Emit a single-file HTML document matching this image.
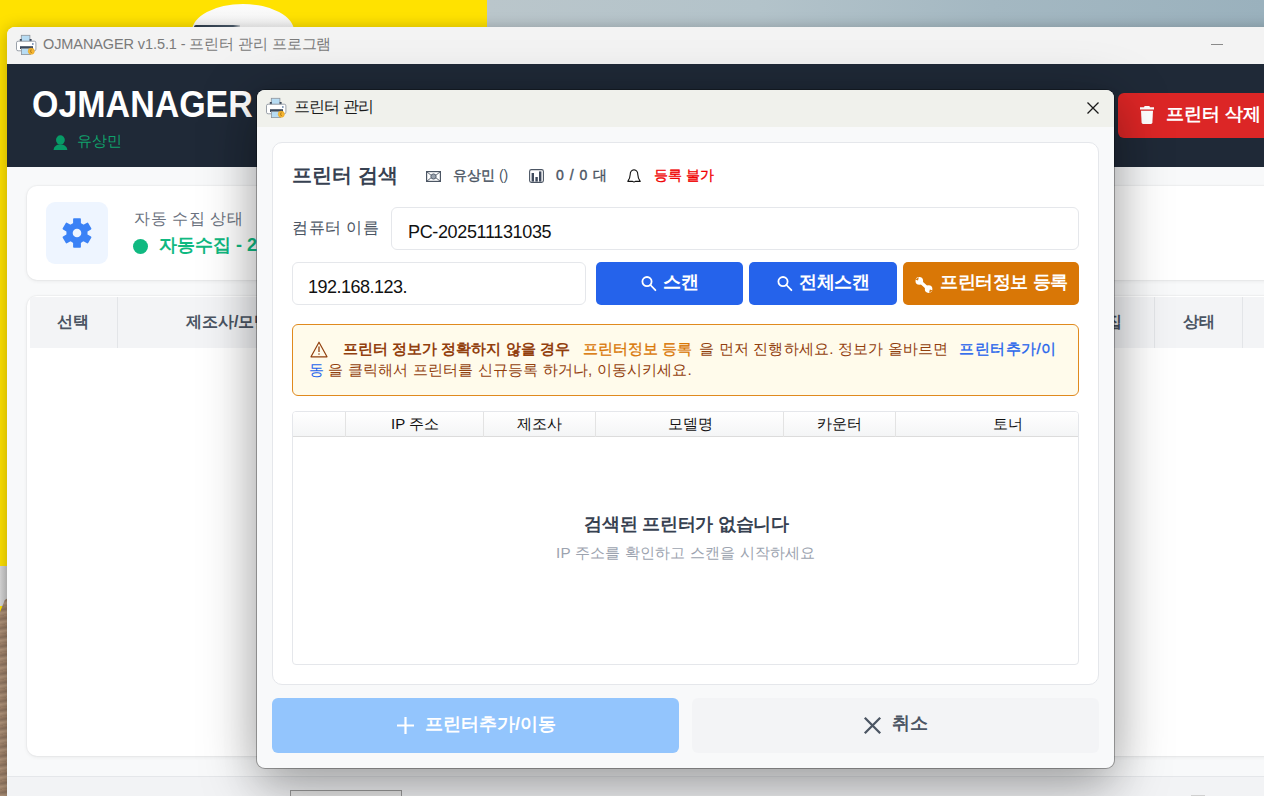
<!DOCTYPE html>
<html><head><meta charset="utf-8">
<style>
*{box-sizing:border-box;margin:0;padding:0}
html,body{width:1264px;height:796px;overflow:hidden}
body{position:relative;font-family:"Liberation Sans",sans-serif;background:#ffe200}
.a{position:absolute}
.t{position:absolute;white-space:nowrap;line-height:1}
svg{position:absolute;overflow:visible}
</style></head><body>

<!-- ===== desktop ===== -->
<div class="a" style="left:487px;top:0;width:777px;height:28px;background:linear-gradient(90deg,#bac6cb 0%,#b3c3ca 35%,#a4b8c2 65%,#9ab1bd 100%)"></div>
<div class="a" style="left:192px;top:4px;width:102px;height:50px;border-radius:51px 51px 0 0/27px 27px 0 0;background:linear-gradient(180deg,#fbfbfb,#eeeeee)"></div>
<div class="a" style="left:194px;top:25px;width:46px;height:2px;background:linear-gradient(90deg,#2c3a4a,#4a5a6a 85%,#c8ccd0);border-radius:2px 0 0 0"></div>
<div class="a" style="left:0;top:566px;width:8px;height:40px;background:linear-gradient(90deg,#dadada,#c4c4c4)"></div>
<div class="a" style="left:0;top:598px;width:8px;height:198px;background:repeating-linear-gradient(170deg,#a8896f 0px,#8f7560 3px,#b3967c 6px,#9a7e66 9px);clip-path:polygon(0 14px,60% 2px,100% 0,100% 100%,0 100%)"></div>

<!-- ===== main window ===== -->
<div class="a" style="left:7px;top:27px;width:1280px;height:790px;background:#f8f9fa;border-top-left-radius:8px;overflow:hidden;box-shadow:0 2px 16px rgba(0,0,0,0.28)">
  <div class="a" style="left:0;top:0;width:1280px;height:37px;background:#f3f3f3"></div>
</div>
<!-- title icon -->
<svg style="left:12px;top:31px" width="28" height="28" viewBox="0 0 28 28">
  <rect x="9.3" y="4.3" width="8.6" height="6.5" fill="#b7dcf3" stroke="#8d949c" stroke-width="0.8"/>
  <rect x="7.8" y="8" width="2" height="2.6" fill="#3c4a5c"/><rect x="17.6" y="8" width="2" height="2.6" fill="#3c4a5c"/>
  <rect x="4.5" y="10.2" width="19.4" height="9.6" rx="1.6" fill="#fff" stroke="#8f96a0" stroke-width="0.9"/>
  <rect x="8" y="15.2" width="13" height="2.8" fill="#3c4a5c"/>
  <rect x="9.4" y="17.6" width="9" height="6" fill="#b7dcf3" stroke="#8d949c" stroke-width="0.8"/>
  <rect x="20.2" y="12.2" width="1.3" height="1.6" fill="#4a6a9a"/>
  <circle cx="19.3" cy="20.2" r="3.1" fill="#f7b731" stroke="#e0a020" stroke-width="0.5"/>
  <path d="M19.2 18.3 L18.6 20.3 L19.5 22" stroke="#8a5a10" stroke-width="0.7" fill="none"/>
</svg>
<div class="t" style="left:43px;top:37px;font-size:14.5px;letter-spacing:-0.1px;color:#7a7a7a">OJMANAGER v1.5.1 - 프린터 관리 프로그램</div>
<div class="a" style="left:1211px;top:44px;width:12px;height:1px;background:#8a8a8a"></div>

<!-- dark header -->
<div class="a" style="left:7px;top:64px;width:1257px;height:103px;background:#1f2937"></div>
<div class="t" style="left:32px;top:86px;font-size:37px;font-weight:bold;color:#fff;transform:scaleX(0.918);transform-origin:0 0">OJMANAGER</div>
<svg style="left:53px;top:135px" width="15" height="15" viewBox="0 0 15 15">
  <ellipse cx="7.4" cy="5" rx="4.4" ry="4.7" fill="#079a66"/>
  <path d="M0.6 15 C0.9 11.2 3.4 9.4 7.4 9.4 C11.4 9.4 13.9 11.2 14.3 15 Z" fill="#079a66"/>
</svg>
<div class="t" style="left:77px;top:133px;font-size:15px;color:#10a06b">유상민</div>

<!-- red delete button -->
<div class="a" style="left:1118px;top:93px;width:170px;height:45px;background:#dc2626;border-radius:6px"></div>
<svg style="left:1139px;top:105px" width="16" height="20" viewBox="0 0 16 20">
  <path d="M1 2.2 H5 L5.6 1 H10.4 L11 2.2 H15 V4.6 H1 Z" fill="#fff"/>
  <path d="M2 5.8 H14 L13.4 17.6 Q13.3 18.9 12 18.9 H4 Q2.7 18.9 2.6 17.6 Z" fill="#fff"/>
</svg>
<div class="t" style="left:1166px;top:105px;font-size:18px;font-weight:bold;color:#fff">프린터 삭제</div>

<!-- status card -->
<div class="a" style="left:27px;top:186px;width:1260px;height:94px;background:#fff;border-radius:10px;box-shadow:0 1px 4px rgba(0,0,0,0.07),0 0 0 1px rgba(0,0,0,0.025)"></div>
<div class="a" style="left:46px;top:202px;width:62px;height:62px;background:#eef5ff;border-radius:9px"></div>
<svg style="left:62px;top:218px" width="30" height="30" viewBox="-15 -15 30 30">
  <g fill="#3b82f6">
    <circle r="10.6"/>
    <rect x="-3.9" y="-14.7" width="7.8" height="8" rx="0.8"/>
    <rect x="-3.9" y="-14.7" width="7.8" height="8" rx="0.8" transform="rotate(60)"/>
    <rect x="-3.9" y="-14.7" width="7.8" height="8" rx="0.8" transform="rotate(120)"/>
    <rect x="-3.9" y="-14.7" width="7.8" height="8" rx="0.8" transform="rotate(180)"/>
    <rect x="-3.9" y="-14.7" width="7.8" height="8" rx="0.8" transform="rotate(240)"/>
    <rect x="-3.9" y="-14.7" width="7.8" height="8" rx="0.8" transform="rotate(300)"/>
  </g>
  <circle r="4.3" fill="#eef5ff"/>
</svg>
<div class="t" style="left:134px;top:211px;font-size:16px;letter-spacing:0.6px;color:#6b7280">자동 수집 상태</div>
<div class="a" style="left:133px;top:239px;width:15px;height:15px;border-radius:50%;background:#10b981"></div>
<div class="t" style="left:159px;top:236px;font-size:18px;font-weight:bold;color:#10b981">자동수집 - 2</div>

<!-- table card -->
<div class="a" style="left:27px;top:296px;width:1260px;height:460px;background:#fff;border-radius:10px;box-shadow:0 1px 4px rgba(0,0,0,0.07),0 0 0 1px rgba(0,0,0,0.025);overflow:hidden">
  <div class="a" style="left:3px;top:1px;width:1258px;height:51px;background:#f3f4f6"></div>
  <div class="a" style="left:90px;top:1px;width:1px;height:51px;background:#e3e5e8"></div>
  <div class="a" style="left:1127px;top:1px;width:1px;height:51px;background:#e3e5e8"></div>
  <div class="a" style="left:1215px;top:1px;width:1px;height:51px;background:#e3e5e8"></div>
</div>
<div class="t" style="left:57px;top:314px;font-size:16px;font-weight:bold;color:#4b5563">선택</div>
<div class="t" style="left:186px;top:314px;font-size:16px;font-weight:bold;color:#4b5563">제조사/모델</div>
<div class="t" style="left:1090px;top:314px;font-size:16px;font-weight:bold;color:#4b5563">수집</div>
<div class="t" style="left:1183px;top:314px;font-size:16px;font-weight:bold;color:#4b5563">상태</div>

<!-- footer -->
<div class="a" style="left:7px;top:776px;width:1257px;height:20px;background:#f2f3f5;border-top:1px solid #e5e7ea"></div>
<div class="a" style="left:1191px;top:795px;width:14px;height:2px;background:#d0d0d0"></div>
<div class="a" style="left:290px;top:790px;width:112px;height:20px;border:1px solid #9a9a9a;background:#e9e9e9"></div>

<!-- ===== dialog ===== -->
<div id="dlg" class="a" style="left:257px;top:90px;width:857px;height:678px;background:#f8f9fa;border-radius:8px;box-shadow:0 0 0 1px rgba(0,0,0,0.3),0 12px 56px rgba(0,0,0,0.36),0 24px 40px rgba(0,0,0,0.08);overflow:hidden">
  <div class="a" style="left:0;top:0;width:857px;height:37px;background:#f0f1ec"></div>
</div>


<!-- dialog title -->
<svg style="left:262px;top:94px" width="28" height="28" viewBox="0 0 28 28">
  <rect x="9.3" y="4.3" width="8.6" height="6.5" fill="#b7dcf3" stroke="#8d949c" stroke-width="0.8"/>
  <rect x="7.8" y="8" width="2" height="2.6" fill="#3c4a5c"/><rect x="17.6" y="8" width="2" height="2.6" fill="#3c4a5c"/>
  <rect x="4.5" y="10.2" width="19.4" height="9.6" rx="1.6" fill="#fff" stroke="#8f96a0" stroke-width="0.9"/>
  <rect x="8" y="15.2" width="13" height="2.8" fill="#3c4a5c"/>
  <rect x="9.4" y="17.6" width="9" height="6" fill="#b7dcf3" stroke="#8d949c" stroke-width="0.8"/>
  <rect x="20.2" y="12.2" width="1.3" height="1.6" fill="#4a6a9a"/>
  <circle cx="19.3" cy="20.2" r="3.1" fill="#f7b731" stroke="#e0a020" stroke-width="0.5"/>
  <path d="M19.2 18.3 L18.6 20.3 L19.5 22" stroke="#8a5a10" stroke-width="0.7" fill="none"/>
</svg>
<div class="t" style="left:294px;top:99px;font-size:16px;color:#1a1a1a;letter-spacing:-0.8px">프린터 관리</div>
<svg style="left:1087px;top:102px" width="12" height="12" viewBox="0 0 12 12"><path d="M0.5 0.5 L11.5 11.5 M11.5 0.5 L0.5 11.5" stroke="#1a1a1a" stroke-width="1.3"/></svg>

<!-- card -->
<div class="a" style="left:272px;top:142px;width:827px;height:543px;background:#fff;border:1px solid #e5e7eb;border-radius:10px"></div>
<div class="t" style="left:292px;top:165px;font-size:20px;font-weight:bold;color:#374151">프린터 검색</div>

<svg style="left:426px;top:171px" width="15" height="11" viewBox="0 0 15 11">
  <rect x="0.6" y="0.6" width="13.8" height="9.8" fill="none" stroke="#4b5563" stroke-width="1.2"/>
  <path d="M0.6 0.6 L5 4.2 M14.4 0.6 L10 4.2 M0.6 10.4 L5 6.8 M14.4 10.4 L10 6.8" stroke="#4b5563" stroke-width="0.9"/>
  <circle cx="7.5" cy="5.5" r="2.6" fill="#9aa3ae" stroke="#4b5563" stroke-width="0.9"/>
</svg>
<div class="t" style="left:453px;top:168px;font-size:14px;color:#4b5563"><span style="-webkit-text-stroke:0.4px #4b5563">유상민</span> ()</div>
<svg style="left:529px;top:169px" width="15" height="14" viewBox="0 0 15 14">
  <rect x="0.6" y="0.6" width="13.8" height="12.8" rx="1.8" fill="none" stroke="#4b5563" stroke-width="1.1"/>
  <rect x="2.6" y="4" width="2.4" height="8.6" fill="#3f4a5c"/>
  <rect x="6.4" y="8" width="2.4" height="4.6" fill="#3f4a5c"/>
  <rect x="10" y="2.4" width="2.4" height="10.2" fill="#3f4a5c"/>
</svg>
<div class="t" style="left:556px;top:168px;font-size:14px;color:#4b5563;word-spacing:2px;-webkit-text-stroke:0.4px #4b5563">0 / 0 대</div>
<svg style="left:627px;top:169px" width="14" height="14" viewBox="0 0 14 14">
  <path d="M7 0.8 C4.6 1.2 3.2 2.8 3.2 5.6 C3.2 8.6 2.6 9.8 0.8 12.4 H5.6 Q7 13.6 8.4 12.4 H13.2 C11.4 9.8 10.8 8.6 10.8 5.6 C10.8 2.8 9.4 1.2 7 0.8 Z" fill="none" stroke="#111" stroke-width="1.1" stroke-linejoin="round"/>
</svg>
<div class="t" style="left:654px;top:168px;font-size:14px;color:#f00000;-webkit-text-stroke:0.35px #f00000">등록 불가</div>

<div class="t" style="left:292px;top:220px;font-size:16px;letter-spacing:0.5px;color:#4b5563">컴퓨터 이름</div>
<div class="a" style="left:391px;top:207px;width:688px;height:43px;background:#fff;border:1px solid #e5e7eb;border-radius:6px"></div>
<div class="t" style="left:408px;top:223px;font-size:18px;color:#111;letter-spacing:-0.35px">PC-202511131035</div>

<div class="a" style="left:292px;top:262px;width:294px;height:43px;background:#fff;border:1px solid #e5e7eb;border-radius:6px"></div>
<div class="t" style="left:308px;top:278px;font-size:18px;color:#111;letter-spacing:-0.5px">192.168.123.</div>

<div class="a" style="left:596px;top:262px;width:147px;height:43px;background:#2563eb;border-radius:5px"></div>
<svg style="left:640px;top:275px" width="17" height="17" viewBox="0 0 17 17"><circle cx="7" cy="6.6" r="4.6" fill="none" stroke="#fff" stroke-width="1.8"/><path d="M10.4 10 L15.4 15.2" stroke="#fff" stroke-width="1.8" stroke-linecap="round"/></svg>
<div class="t" style="left:663px;top:273px;font-size:18px;font-weight:bold;color:#fff">스캔</div>

<div class="a" style="left:749px;top:262px;width:148px;height:43px;background:#2563eb;border-radius:5px"></div>
<svg style="left:776px;top:275px" width="17" height="17" viewBox="0 0 17 17"><circle cx="7" cy="6.6" r="4.6" fill="none" stroke="#fff" stroke-width="1.8"/><path d="M10.4 10 L15.4 15.2" stroke="#fff" stroke-width="1.8" stroke-linecap="round"/></svg>
<div class="t" style="left:799px;top:273px;font-size:18px;font-weight:bold;color:#fff;letter-spacing:-0.5px">전체스캔</div>

<div class="a" style="left:903px;top:262px;width:176px;height:43px;background:#d97706;border-radius:5px"></div>
<svg style="left:910px;top:272px" width="26" height="26" viewBox="0 0 26 26">
  <path d="M9.2 8.8 L18.7 17.2" stroke="#fff" stroke-width="3.2" stroke-linecap="round"/>
  <circle cx="9.3" cy="8.9" r="3.8" fill="#fff"/><circle cx="18.6" cy="17.1" r="3.8" fill="#fff"/>
  <path d="M5.2 7.6 L8 8.4 L8.8 5.2 Z" fill="#d97706"/><path d="M22.7 18.4 L19.9 17.6 L19.1 20.8 Z" fill="#d97706"/>
</svg>
<div class="t" style="left:940px;top:273px;font-size:18px;font-weight:bold;color:#fff;letter-spacing:-0.4px">프린터정보 등록</div>

<!-- warning -->
<div class="a" style="left:292px;top:324px;width:787px;height:72px;background:#fffbeb;border:1px solid #e08a1e;border-radius:6px"></div>
<svg style="left:310px;top:341px" width="18" height="17" viewBox="0 0 18 17">
  <path d="M9 1.2 L17 15.8 H1 Z" fill="none" stroke="#92400e" stroke-width="1.2" stroke-linejoin="round"/>
  <path d="M9 5.6 V11" stroke="#92400e" stroke-width="1.3"/><rect x="8.35" y="12.4" width="1.3" height="1.3" fill="#92400e"/>
</svg>
<div class="t" style="left:343px;top:341px;font-size:15.2px;color:#92400e;font-weight:bold">프린터 정보가 정확하지 않을 경우</div>
<div class="t" style="left:583px;top:341px;font-size:15.2px;color:#d97706;-webkit-text-stroke:0.35px #d97706">프린터정보 등록</div>
<div class="t" style="left:699px;top:341px;font-size:15.2px;letter-spacing:0.17px;color:#92400e">을 먼저 진행하세요. 정보가 올바르면</div>
<div class="t" style="left:959px;top:341px;font-size:15.2px;letter-spacing:0.5px;color:#2563eb;-webkit-text-stroke:0.35px #2563eb">프린터추가/이</div>
<div class="t" style="left:309px;top:362px;font-size:15.2px;letter-spacing:0.13px;color:#92400e"><span style="color:#2563eb">동</span> 을 클릭해서 프린터를 신규등록 하거나, 이동시키세요.</div>

<!-- result table -->
<div class="a" style="left:292px;top:411px;width:787px;height:254px;background:#fff;border:1px solid #e5e7eb;border-radius:4px;overflow:hidden">
  <div class="a" style="left:0;top:0;width:787px;height:25px;background:linear-gradient(#ffffff,#f4f5f6);border-bottom:1px solid #dcdcdc"></div>
  <div class="a" style="left:52px;top:0;width:1px;height:25px;background:#e3e3e3"></div>
  <div class="a" style="left:190px;top:0;width:1px;height:25px;background:#e3e3e3"></div>
  <div class="a" style="left:302px;top:0;width:1px;height:25px;background:#e3e3e3"></div>
  <div class="a" style="left:490px;top:0;width:1px;height:25px;background:#e3e3e3"></div>
  <div class="a" style="left:602px;top:0;width:1px;height:25px;background:#e3e3e3"></div>
</div>
<div class="t" style="left:391px;top:416px;font-size:15px;color:#111">IP 주소</div>
<div class="t" style="left:517px;top:416px;font-size:15px;color:#111">제조사</div>
<div class="t" style="left:668px;top:416px;font-size:15px;color:#111">모델명</div>
<div class="t" style="left:817px;top:416px;font-size:15px;color:#111">카운터</div>
<div class="t" style="left:993px;top:416px;font-size:15px;color:#111">토너</div>

<div class="t" style="left:584px;top:515px;font-size:18px;font-weight:bold;color:#374151;letter-spacing:-0.25px">검색된 프린터가 없습니다</div>
<div class="t" style="left:556px;top:545px;font-size:15.2px;letter-spacing:0.17px;color:#9ca3af">IP 주소를 확인하고 스캔을 시작하세요</div>

<!-- bottom buttons -->
<div class="a" style="left:272px;top:698px;width:407px;height:55px;background:#93c5fd;border-radius:6px"></div>
<svg style="left:397px;top:717px" width="17" height="17" viewBox="0 0 17 17"><path d="M8.5 0 V17 M0 8.5 H17" stroke="#fff" stroke-width="2.2"/></svg>
<div class="t" style="left:425px;top:715px;font-size:18px;font-weight:bold;color:#fff">프린터추가/이동</div>

<div class="a" style="left:692px;top:698px;width:407px;height:55px;background:#f3f4f6;border-radius:6px"></div>
<svg style="left:864px;top:717px" width="17" height="17" viewBox="0 0 17 17"><path d="M0.8 0.8 L16.2 16.2 M16.2 0.8 L0.8 16.2" stroke="#4b5563" stroke-width="2.3"/></svg>
<div class="t" style="left:892px;top:714px;font-size:18px;font-weight:bold;color:#4b5563">취소</div>

</body></html>
